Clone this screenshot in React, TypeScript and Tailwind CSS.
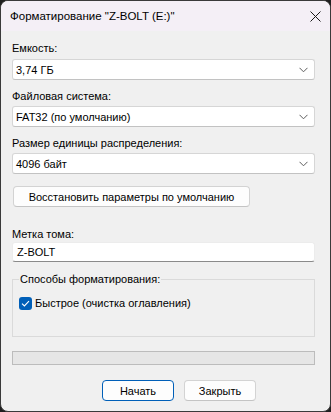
import React from "react";

const font = { fontFamily: '"Liberation Sans", Arial, sans-serif' };

function Chevron() {
  return (
    <svg width="9" height="6" viewBox="0 0 9 6" className="shrink-0">
      <path d="M0.5 0.8 L4.5 4.8 L8.5 0.8" fill="none" stroke="#5d5d5d" strokeWidth="1" />
    </svg>
  );
}

function Combo({ value }: { value: string }) {
  return (
    <div className="flex h-[21px] items-center justify-between rounded-[3px] border border-[#d6d6d6] border-b-[#c2c2c2] bg-white pl-[3px] pr-[6px]">
      <span className="whitespace-nowrap text-[11px] leading-[16px] text-black">{value}</span>
      <Chevron />
    </div>
  );
}

export default function App() {
  return (
    <div className="h-[412px] w-[331px] bg-[#1f1f1f]" style={font}>
      <div className="flex h-[412px] w-[331px] flex-col overflow-hidden rounded-[8px] border border-[#3a3a3a] bg-[#f0f0f0]">
        <div className="flex h-[30px] shrink-0 items-center justify-between bg-[#f4eff6] pl-[9px] pr-[9px]">
          <span className="whitespace-nowrap text-[11.5px] leading-[16px] text-black">Форматирование "Z-BOLT (E:)"</span>
          <svg width="11" height="11" viewBox="0 0 11 11">
            <path d="M0.5 0.5 L10.5 10.5 M10.5 0.5 L0.5 10.5" stroke="#1a1a1a" strokeWidth="1" />
          </svg>
        </div>
        <div className="flex flex-col whitespace-nowrap pl-[11px] pr-[15px] text-[11px] leading-[16px] text-black">
          <div className="mt-[9px]">Емкость:</div>
          <div className="mt-[3px]"><Combo value="3,74 ГБ" /></div>
          <div className="mt-[8px]">Файловая система:</div>
          <div className="mt-[2px]"><Combo value="FAT32 (по умолчанию)" /></div>
          <div className="mt-[8px]">Размер единицы распределения:</div>
          <div className="mt-[2px]"><Combo value="4096 байт" /></div>
          <div className="mt-[12px] flex">
            <div className="ml-[1px] flex h-[21px] w-[237px] items-center justify-center rounded-[4px] border border-[#d3d3d3] border-b-[#c4c4c4] bg-[#fdfdfd]">
              Восстановить параметры по умолчанию
            </div>
          </div>
          <div className="mt-[19px]">Метка тома:</div>
          <div className="flex h-[20px] items-center rounded-[3px] border border-[#ececec] border-b-[#8a8a8a] bg-white pl-[4px]">
            Z-BOLT
          </div>
          <div className="relative mt-[17px] h-[58px] border border-[#dadada]">
            <span className="absolute left-[6px] top-[-9px] bg-[#f0f0f0] px-[1px]">Способы форматирования:</span>
            <div className="ml-[6px] mt-[15px] flex items-center gap-[3px]">
              <div className="flex h-[13px] w-[13px] items-center justify-center rounded-[3px] bg-[#005fb8]">
                <svg width="9" height="7" viewBox="0 0 9 7">
                  <path d="M1 3.6 L3.4 6 L8 1.2" fill="none" stroke="#ffffff" strokeWidth="1.1" />
                </svg>
              </div>
              <span>Быстрое (очистка оглавления)</span>
            </div>
          </div>
          <div className="mt-[14px] h-[14px] border border-[#bcbcbc] bg-[#e6e6e6]" />
          <div className="mt-[15px] flex gap-[10px] pl-[90px]">
            <div className="flex h-[21px] w-[72px] items-center justify-center rounded-[4px] border border-[#005fb8] bg-[#fdfdfd]">
              Начать
            </div>
            <div className="flex h-[21px] w-[72px] items-center justify-center rounded-[4px] border border-[#d3d3d3] border-b-[#c4c4c4] bg-[#fdfdfd]">
              Закрыть
            </div>
          </div>
        </div>
      </div>
    </div>
  );
}
